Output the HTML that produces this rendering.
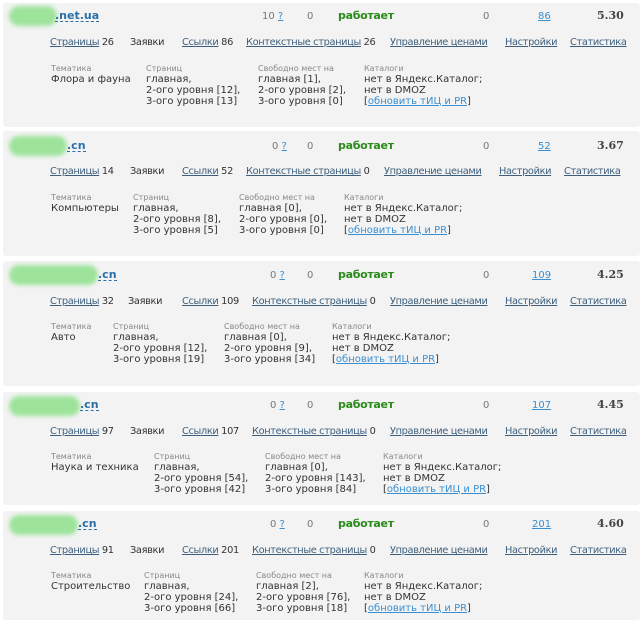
<!DOCTYPE html>
<html><head><meta charset="utf-8"><style>
body{margin:0;width:640px;height:620px;background:#fff;position:relative;overflow:hidden;font-family:"DejaVu Sans","Liberation Sans",sans-serif;font-size:10px;color:#333}
.p{position:absolute;left:3px;right:0;background:#f3f3f3;border-radius:3px}
.a{position:absolute;white-space:nowrap;line-height:11px}
.k{letter-spacing:-0.35px;font-size:9.8px}
.blob{position:absolute;background:#9de39a;border-radius:10px;filter:blur(2px);height:20px}
.dom{font-weight:bold;color:#2a6fa8;border-bottom:1px dashed #2a6fa8;font-size:11px}
.g{color:#2a8a1a;font-weight:bold;font-size:11px;letter-spacing:-0.3px}
.n{color:#777}
.l{color:#3d5f7d;text-decoration:underline}
.b{color:#3a8fd0;text-decoration:underline}
.r{font-family:"DejaVu Serif","Liberation Serif",serif;font-weight:bold;color:#444;font-size:11px}
.s{font-size:8px;color:#888}
</style></head><body>

<div class="p" style="top:3px;height:124px"></div>
<div class="p" style="top:131px;height:125px"></div>
<div class="p" style="top:261px;height:125px"></div>
<div class="p" style="top:392px;height:113px"></div>
<div class="p" style="top:511px;height:109px"></div>

<!-- block 1 -->
<div class="blob" style="left:9px;top:6px;width:48px"></div>
<span class="a dom" style="left:55px;top:10px">.net.ua</span>
<span class="a n" style="left:262px;top:11px">10 <span class="b">?</span></span>
<span class="a n" style="left:307px;top:11px">0</span>
<span class="a g" style="left:338px;top:10px">работает</span>
<span class="a n" style="left:483px;top:11px">0</span>
<span class="a b" style="left:538px;top:11px">86</span>
<span class="a r" style="left:597px;top:10px">5.30</span>
<span class="a k" style="left:50px;top:37px"><span class="l">Страницы</span> 26</span>
<span class="a k" style="left:130px;top:37px">Заявки</span>
<span class="a k" style="left:182px;top:37px"><span class="l">Ссылки</span> 86</span>
<span class="a k" style="left:246px;top:37px"><span class="l">Контекстные страницы</span> 26</span>
<span class="a l k" style="left:390px;top:37px">Управление ценами</span>
<span class="a l k" style="left:505px;top:37px">Настройки</span>
<span class="a l k" style="left:570px;top:37px">Статистика</span>
<span class="a s" style="left:51px;top:63px">Тематика</span>
<span class="a" style="left:51px;top:74px">Флора и фауна</span>
<span class="a s" style="left:146px;top:63px">Страниц</span>
<span class="a" style="left:146px;top:74px">главная,<br>2-ого уровня [12],<br>3-ого уровня [13]</span>
<span class="a s" style="left:258px;top:63px">Свободно мест на</span>
<span class="a" style="left:258px;top:74px">главная [1],<br>2-ого уровня [2],<br>3-ого уровня [0]</span>
<span class="a s" style="left:364px;top:63px">Каталоги</span>
<span class="a" style="left:364px;top:74px">нет в Яндекс.Каталог;<br>нет в DMOZ<br>[<span class="b">обновить тИЦ и PR</span>]</span>

<!-- block 2 -->
<div class="blob" style="left:9px;top:136px;width:58px"></div>
<span class="a dom" style="left:67px;top:140px">.cn</span>
<span class="a n" style="left:272px;top:141px">0 <span class="b">?</span></span>
<span class="a n" style="left:307px;top:141px">0</span>
<span class="a g" style="left:338px;top:140px">работает</span>
<span class="a n" style="left:483px;top:141px">0</span>
<span class="a b" style="left:538px;top:141px">52</span>
<span class="a r" style="left:597px;top:140px">3.67</span>
<span class="a k" style="left:50px;top:166px"><span class="l">Страницы</span> 14</span>
<span class="a k" style="left:130px;top:166px">Заявки</span>
<span class="a k" style="left:182px;top:166px"><span class="l">Ссылки</span> 52</span>
<span class="a k" style="left:246px;top:166px"><span class="l">Контекстные страницы</span> 0</span>
<span class="a l k" style="left:384px;top:166px">Управление ценами</span>
<span class="a l k" style="left:499px;top:166px">Настройки</span>
<span class="a l k" style="left:564px;top:166px">Статистика</span>
<span class="a s" style="left:51px;top:192px">Тематика</span>
<span class="a" style="left:51px;top:203px">Компьютеры</span>
<span class="a s" style="left:133px;top:192px">Страниц</span>
<span class="a" style="left:133px;top:203px">главная,<br>2-ого уровня [8],<br>3-ого уровня [5]</span>
<span class="a s" style="left:239px;top:192px">Свободно мест на</span>
<span class="a" style="left:239px;top:203px">главная [0],<br>2-ого уровня [0],<br>3-ого уровня [0]</span>
<span class="a s" style="left:344px;top:192px">Каталоги</span>
<span class="a" style="left:344px;top:203px">нет в Яндекс.Каталог;<br>нет в DMOZ<br>[<span class="b">обновить тИЦ и PR</span>]</span>

<!-- block 3 -->
<div class="blob" style="left:9px;top:265px;width:89px"></div>
<span class="a dom" style="left:98px;top:269px">.cn</span>
<span class="a n" style="left:270px;top:270px">0 <span class="b">?</span></span>
<span class="a n" style="left:307px;top:270px">0</span>
<span class="a g" style="left:338px;top:269px">работает</span>
<span class="a n" style="left:483px;top:270px">0</span>
<span class="a b" style="left:532px;top:270px">109</span>
<span class="a r" style="left:597px;top:269px">4.25</span>
<span class="a k" style="left:50px;top:296px"><span class="l">Страницы</span> 32</span>
<span class="a k" style="left:128px;top:296px">Заявки</span>
<span class="a k" style="left:182px;top:296px"><span class="l">Ссылки</span> 109</span>
<span class="a k" style="left:252px;top:296px"><span class="l">Контекстные страницы</span> 0</span>
<span class="a l k" style="left:390px;top:296px">Управление ценами</span>
<span class="a l k" style="left:505px;top:296px">Настройки</span>
<span class="a l k" style="left:570px;top:296px">Статистика</span>
<span class="a s" style="left:51px;top:321px">Тематика</span>
<span class="a" style="left:51px;top:332px">Авто</span>
<span class="a s" style="left:113px;top:321px">Страниц</span>
<span class="a" style="left:113px;top:332px">главная,<br>2-ого уровня [12],<br>3-ого уровня [19]</span>
<span class="a s" style="left:224px;top:321px">Свободно мест на</span>
<span class="a" style="left:224px;top:332px">главная [0],<br>2-ого уровня [9],<br>3-ого уровня [34]</span>
<span class="a s" style="left:332px;top:321px">Каталоги</span>
<span class="a" style="left:332px;top:332px">нет в Яндекс.Каталог;<br>нет в DMOZ<br>[<span class="b">обновить тИЦ и PR</span>]</span>

<!-- block 4 -->
<div class="blob" style="left:9px;top:396px;width:71px"></div>
<span class="a dom" style="left:80px;top:399px">.cn</span>
<span class="a n" style="left:270px;top:400px">0 <span class="b">?</span></span>
<span class="a n" style="left:307px;top:400px">0</span>
<span class="a g" style="left:338px;top:399px">работает</span>
<span class="a n" style="left:483px;top:400px">0</span>
<span class="a b" style="left:532px;top:400px">107</span>
<span class="a r" style="left:597px;top:399px">4.45</span>
<span class="a k" style="left:50px;top:426px"><span class="l">Страницы</span> 97</span>
<span class="a k" style="left:130px;top:426px">Заявки</span>
<span class="a k" style="left:182px;top:426px"><span class="l">Ссылки</span> 107</span>
<span class="a k" style="left:252px;top:426px"><span class="l">Контекстные страницы</span> 0</span>
<span class="a l k" style="left:390px;top:426px">Управление ценами</span>
<span class="a l k" style="left:505px;top:426px">Настройки</span>
<span class="a l k" style="left:570px;top:426px">Статистика</span>
<span class="a s" style="left:51px;top:451px">Тематика</span>
<span class="a" style="left:51px;top:462px">Наука и техника</span>
<span class="a s" style="left:154px;top:451px">Страниц</span>
<span class="a" style="left:154px;top:462px">главная,<br>2-ого уровня [54],<br>3-ого уровня [42]</span>
<span class="a s" style="left:265px;top:451px">Свободно мест на</span>
<span class="a" style="left:265px;top:462px">главная [0],<br>2-ого уровня [143],<br>3-ого уровня [84]</span>
<span class="a s" style="left:383px;top:451px">Каталоги</span>
<span class="a" style="left:383px;top:462px">нет в Яндекс.Каталог;<br>нет в DMOZ<br>[<span class="b">обновить тИЦ и PR</span>]</span>

<!-- block 5 -->
<div class="blob" style="left:9px;top:515px;width:69px"></div>
<span class="a dom" style="left:78px;top:518px">.cn</span>
<span class="a n" style="left:270px;top:519px">0 <span class="b">?</span></span>
<span class="a n" style="left:307px;top:519px">0</span>
<span class="a g" style="left:338px;top:518px">работает</span>
<span class="a n" style="left:483px;top:519px">0</span>
<span class="a b" style="left:532px;top:519px">201</span>
<span class="a r" style="left:597px;top:518px">4.60</span>
<span class="a k" style="left:50px;top:545px"><span class="l">Страницы</span> 91</span>
<span class="a k" style="left:130px;top:545px">Заявки</span>
<span class="a k" style="left:182px;top:545px"><span class="l">Ссылки</span> 201</span>
<span class="a k" style="left:252px;top:545px"><span class="l">Контекстные страницы</span> 0</span>
<span class="a l k" style="left:390px;top:545px">Управление ценами</span>
<span class="a l k" style="left:505px;top:545px">Настройки</span>
<span class="a l k" style="left:570px;top:545px">Статистика</span>
<span class="a s" style="left:51px;top:570px">Тематика</span>
<span class="a" style="left:51px;top:581px">Строительство</span>
<span class="a s" style="left:144px;top:570px">Страниц</span>
<span class="a" style="left:144px;top:581px">главная,<br>2-ого уровня [24],<br>3-ого уровня [66]</span>
<span class="a s" style="left:256px;top:570px">Свободно мест на</span>
<span class="a" style="left:256px;top:581px">главная [2],<br>2-ого уровня [76],<br>3-ого уровня [18]</span>
<span class="a s" style="left:364px;top:570px">Каталоги</span>
<span class="a" style="left:364px;top:581px">нет в Яндекс.Каталог;<br>нет в DMOZ<br>[<span class="b">обновить тИЦ и PR</span>]</span>

</body></html>
